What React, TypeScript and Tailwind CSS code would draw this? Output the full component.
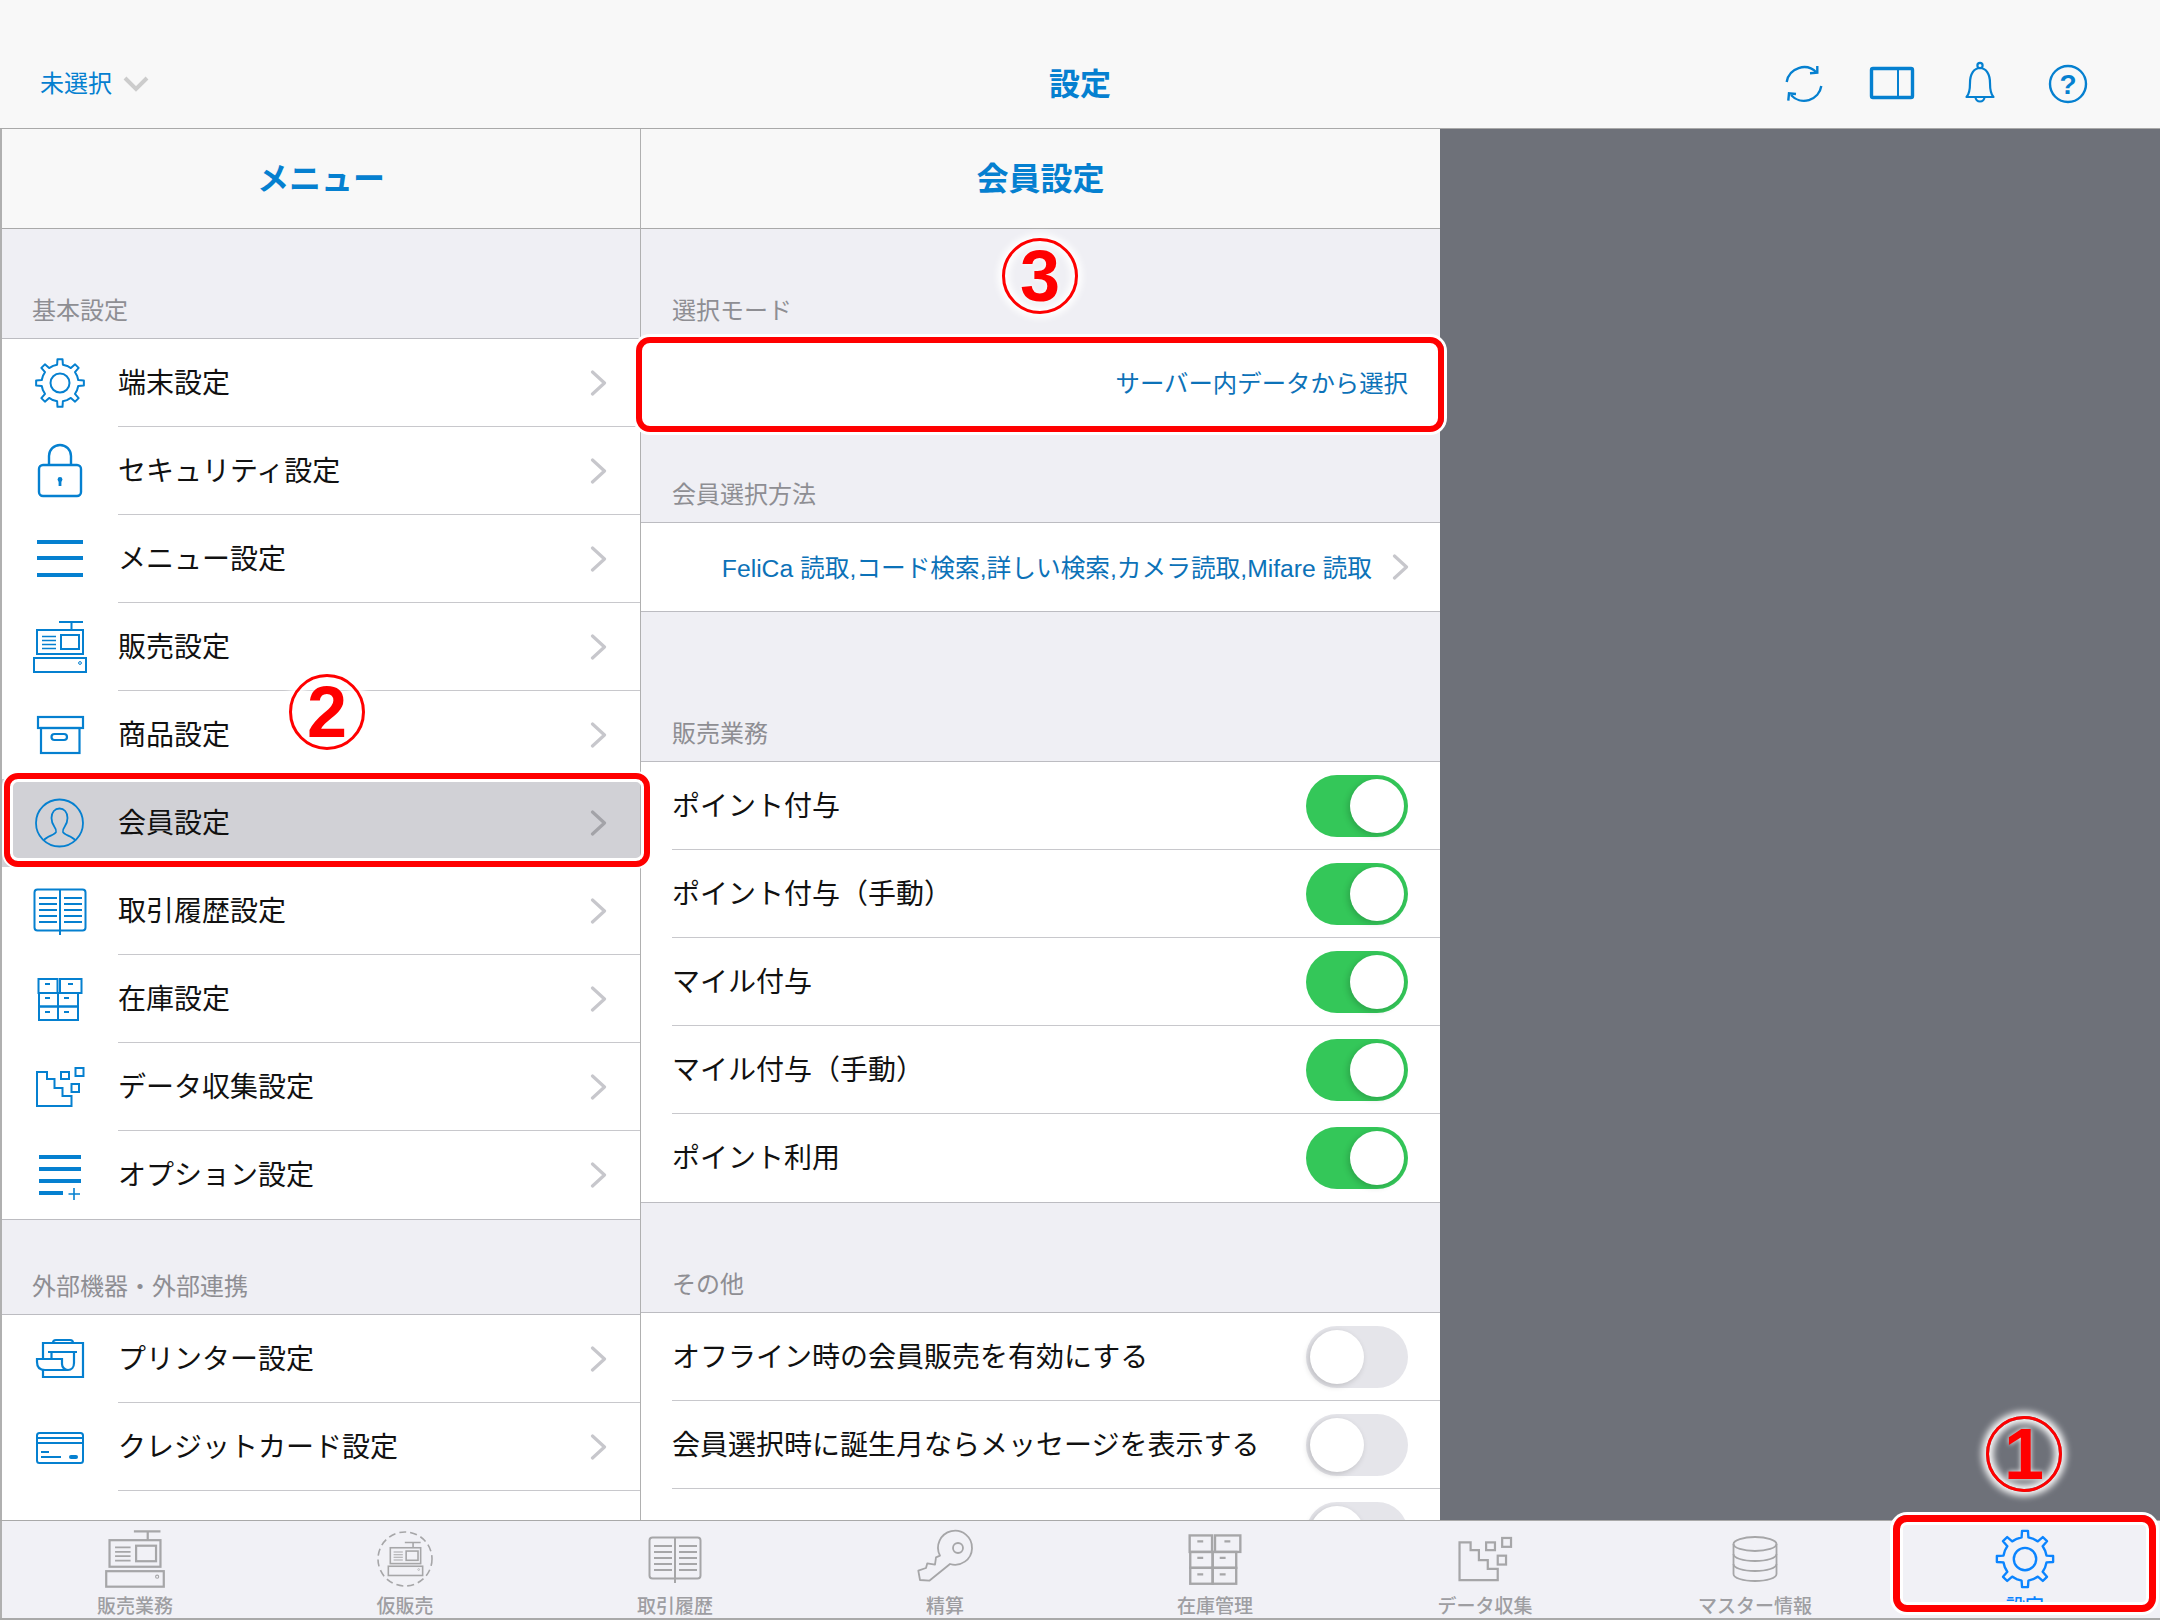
import type { ReactNode } from 'react';

const gearPoints = () => {
    const pts: string[] = [];
    for (let i = 0; i < 8; i++) {
        const a = -90 + i * 45;
        [
            [a - 22, 18.5],
            [a - 9, 18.5],
            [a - 6, 24],
            [a + 6, 24],
            [a + 9, 18.5],
        ].forEach(([deg, r]) => {
            const t = (deg * Math.PI) / 180;
            pts.push(`${(28 + r * Math.cos(t)).toFixed(2)},${(28 + r * Math.sin(t)).toFixed(2)}`);
        });
    }
    return pts.join(' ');
};

function Svg({ size = 56, box = '0 0 56 56', sw = 2, children }: { size?: number; box?: string; sw?: number; children: ReactNode }) {
    return (
        <svg width={size} height={size} viewBox={box} fill="none" stroke="currentColor" strokeWidth={sw} className="shrink-0">
            {children}
        </svg>
    );
}

function GearIcon({ size }: { size?: number }) {
    return (
        <Svg size={size}>
            <polygon points={gearPoints()} strokeLinejoin="round" />
            <circle cx="28" cy="28" r="9.5" />
        </Svg>
    );
}

function LockIcon() {
    return (
        <Svg sw={2.4}>
            <rect x="7" y="22" width="42" height="31" rx="4" />
            <path d="M17 22V13a11 11 0 0 1 22 0v9" />
            <circle cx="28" cy="36.5" r="2.4" fill="currentColor" stroke="none" />
            <rect x="26.6" y="37" width="2.8" height="6" fill="currentColor" stroke="none" />
        </Svg>
    );
}

function MenuIcon() {
    return (
        <Svg sw={4}>
            <path d="M5 11H51M5 27H51M5 44H51" />
        </Svg>
    );
}

function RegisterShapes() {
    return (
        <>
            <path d="M27 3H51M39.5 3V11" />
            <rect x="5" y="11" width="46" height="24" />
            <rect x="29" y="16" width="18" height="14" />
            <path d="M10 17.5H24M10 21.5H24M10 25.5H24M10 29.5H24" strokeWidth="1.6" />
            <rect x="2" y="39" width="52" height="14" />
            <circle cx="48" cy="44" r="1.4" strokeWidth="1" />
        </>
    );
}

function RegisterIcon({ size }: { size?: number }) {
    return (
        <Svg size={size}>
            <RegisterShapes />
        </Svg>
    );
}

function DashedRegisterIcon() {
    return (
        <Svg size={64} box="0 0 64 64" sw={1.6}>
            <circle cx="32" cy="32" r="27" strokeDasharray="7 4" />
            <g transform="translate(14 13.5) scale(0.66)" strokeWidth="2.4">
                <RegisterShapes />
            </g>
        </Svg>
    );
}

function BoxIcon() {
    return (
        <Svg sw={2.2}>
            <rect x="6" y="10" width="45" height="11" />
            <rect x="9" y="21" width="38.5" height="25" />
            <rect x="19.5" y="27" width="15.5" height="6" rx="3" />
        </Svg>
    );
}

function PersonIcon() {
    return (
        <Svg sw={1.8}>
            <circle cx="27.5" cy="28" r="23.5" />
            <path d="M12 45c3-4 11-5 12-8 .5-2 0-3-1.5-5-1.500-2-3-5-3-9 0-6 3.500-9.500 8-9.500s8 3.500 8 9.500c0 4-1.500 7-3 9-1.500 2-2 3-1.500 5 1 3 9 4 12 8" />
        </Svg>
    );
}

function BookIcon({ size }: { size?: number }) {
    return (
        <Svg size={size} sw={2}>
            <rect x="2.500" y="6.500" width="51" height="41" rx="3" />
            <path d="M28 6.500V52" />
            <path d="M7 15H25M7 21H25M7 27H25M7 33H25M7 39H25M32 15H50M32 21H50M32 27H50M32 33H50M32 39H50" />
        </Svg>
    );
}

function DrawersIcon({ size }: { size?: number }) {
    return (
        <Svg size={size} sw={2}>
            <rect x="6.500" y="8" width="19" height="14" />
            <rect x="28" y="8" width="21.500" height="14" />
            <rect x="7" y="22" width="19" height="13.500" />
            <rect x="26" y="22" width="20" height="13.500" />
            <rect x="7" y="35.500" width="19" height="13.500" />
            <rect x="26" y="35.500" width="20" height="13.500" />
            <path d="M13 13H18M36 13H41M13 27H18M32 27H37M13 41H18M32 41H37" />
        </Svg>
    );
}

function StairsIcon({ size }: { size?: number }) {
    return (
        <Svg size={size} sw={2}>
            <path d="M5 13H15V20H22.500V29H30.500V37H39.500V47H5Z" />
            <rect x="29" y="13" width="8" height="7" />
            <rect x="43.500" y="9" width="8" height="8" />
            <rect x="39.500" y="25" width="7.500" height="8" />
        </Svg>
    );
}

function ListPlusIcon() {
    return (
        <Svg sw={4}>
            <path d="M7 10H49M7 22H49M7 34H49M7 46H31" />
            <path d="M42 41V53M36.500 47H48" strokeWidth="1.600" />
        </Svg>
    );
}

function PrinterIcon() {
    return (
        <Svg sw={2.200}>
            <path d="M11 28V12H51V46H11V39" />
            <path d="M21 12C21 10 22 9 24 9H38C40 9 41 10 41 12" />
            <path d="M16 21H45M19.500 21V28M42 21V32C42 36 39.500 39 36 39C32.500 39 30 36 30 33V28H5V31C5 36 8 39 13 39H36" />
        </Svg>
    );
}

function CardIcon() {
    return (
        <Svg sw={2}>
            <rect x="5" y="14" width="46" height="30" rx="2.500" />
            <path d="M5 19H51M5 24H51" />
            <path d="M9 33H17M9 38H29" />
            <rect x="37" y="36" width="9" height="4" rx="2" fill="currentColor" stroke="none" />
        </Svg>
    );
}

function KeyIcon() {
    return (
        <Svg size={70} box="10 0 70 70" sw={1.800}>
            <path d="M40 31.700A17 17 0 1 1 50 40L29.300 56.700L20 56L18.300 46.700L26 44L27.300 39.300L35 40.700L36 33.300Z" strokeLinejoin="round" />
            <circle cx="58" cy="24" r="5" />
        </Svg>
    );
}

function DatabaseIcon() {
    return (
        <Svg size={56} sw={1.800}>
            <ellipse cx="28" cy="13" rx="21.500" ry="7" />
            <path d="M6.500 13V43C6.500 47 16 50 28 50S49.500 47 49.500 43V13" />
            <path d="M6.500 23C6.500 27 16 30 28 30S49.500 27 49.500 23M6.500 33C6.500 37 16 40 28 40S49.500 37 49.500 33" />
        </Svg>
    );
}

function Chevron({ dark }: { dark?: boolean }) {
    return (
        <svg width="17" height="26" viewBox="0 0 17 26" fill="none" stroke={dark ? '#a3a3a8' : '#c7c7cc'} strokeWidth="3.200" strokeLinecap="round" strokeLinejoin="round" className="shrink-0">
            <path d="M2.500 2L14.500 13L2.500 24" />
        </svg>
    );
}

function Toggle({ on }: { on: boolean }) {
    return (
        <div className={on ? 'flex h-[62px] w-[102px] shrink-0 justify-end rounded-full bg-[#34c759] p-[4px]' : 'flex h-[62px] w-[102px] shrink-0 justify-start rounded-full bg-[#e5e5ea] p-[4px]'}>
            <div className="h-[54px] w-[54px] rounded-full bg-white shadow-[-2px_2px_6px_rgba(0,0,0,0.18)]" />
        </div>
    );
}

function SectionHead({ label, className }: { label: string; className: string }) {
    return (
        <div className={`flex shrink-0 items-end border-b border-[#bcbcc1] bg-[#efeff4] pb-[10px] text-[24px] leading-[34px] text-[#8e8e93] ${className}`}>
            {label}
        </div>
    );
}

const menuBasic: { label: string; icon: ReactNode; selected?: boolean }[] = [
    { label: '端末設定', icon: <GearIcon /> },
    { label: 'セキュリティ設定', icon: <LockIcon /> },
    { label: 'メニュー設定', icon: <MenuIcon /> },
    { label: '販売設定', icon: <RegisterIcon /> },
    { label: '商品設定', icon: <BoxIcon /> },
    { label: '会員設定', icon: <PersonIcon />, selected: true },
    { label: '取引履歴設定', icon: <BookIcon /> },
    { label: '在庫設定', icon: <DrawersIcon /> },
    { label: 'データ収集設定', icon: <StairsIcon /> },
    { label: 'オプション設定', icon: <ListPlusIcon /> },
];

const menuExternal = [
    { label: 'プリンター設定', icon: <PrinterIcon /> },
    { label: 'クレジットカード設定', icon: <CardIcon /> },
];

function MenuRow({ label, icon, selected, last }: { label: string; icon: ReactNode; selected?: boolean; last?: boolean }) {
    return (
        <div className={selected ? 'flex h-[88px] shrink-0 items-center bg-[#d1d1d6] pl-[30px]' : 'flex h-[88px] shrink-0 items-center pl-[30px]'}>
            <div className="text-[#0580d0]">{icon}</div>
            <div className={last ? 'ml-[30px] flex h-full flex-1 items-center pr-[33px]' : 'ml-[30px] flex h-full flex-1 items-center border-b border-[#c8c8cc] pr-[33px]'}>
                <span className="flex-1 pt-[2px] text-[28px] text-[#111]">{label}</span>
                <Chevron dark={selected} />
            </div>
        </div>
    );
}

function SwitchRow({ label, on, last }: { label: string; on: boolean; last?: boolean }) {
    return (
        <div className="h-[88px] shrink-0 pl-[31px]">
            <div className={last ? 'flex h-full items-center justify-between pr-[32px]' : 'flex h-full items-center justify-between border-b border-[#c8c8cc] pr-[32px]'}>
                <span className="pt-[2px] text-[28px] text-[#111]">{label}</span>
                <Toggle on={on} />
            </div>
        </div>
    );
}

const tabs = [
    { label: '販売業務', icon: <RegisterIcon size={62} /> },
    { label: '仮販売', icon: <DashedRegisterIcon /> },
    { label: '取引履歴', icon: <BookIcon size={56} /> },
    { label: '精算', icon: <KeyIcon /> },
    { label: '在庫管理', icon: <DrawersIcon size={66} /> },
    { label: 'データ収集', icon: <StairsIcon size={62} /> },
    { label: 'マスター情報', icon: <DatabaseIcon /> },
];

function Annotation({ digit, className }: { digit: string; className: string }) {
    return (
        <div className={`absolute flex h-[76px] w-[76px] items-center justify-center rounded-full border-[3px] border-[#ff0000] font-['Liberation_Sans',sans-serif] text-[72px] leading-none font-bold text-[#ff0000] shadow-[0_0_7px_4px_white,inset_0_0_7px_4px_white] [text-shadow:0_0_5px_white] ${className}`}>
            {digit}
        </div>
    );
}

export default function App() {
    return (
        <div className="relative flex h-[1620px] w-[2160px] flex-col overflow-hidden bg-[#f1f1f6] font-['Liberation_Sans','Noto_Sans_CJK_JP',sans-serif]">
            <header className="grid h-[129px] shrink-0 grid-cols-3 items-center border-b border-[#a9a9a9] bg-[#f8f8f8] pt-[40px] text-[#0580d0]">
                <div className="flex items-center gap-[11px] pl-[40px]">
                    <span className="text-[24px]">未選択</span>
                    <svg width="26" height="16" viewBox="0 0 26 16" fill="none" stroke="#cccccc" strokeWidth="4">
                        <path d="M2 2L13 13L24 2" />
                    </svg>
                </div>
                <div className="justify-self-center pt-[2px] text-[31px] font-bold">設定</div>
                <div className="flex justify-end pr-[48px]">
                    <div className="flex w-[88px] justify-center">
                        <svg width="48" height="48" viewBox="0 0 48 48" fill="none" stroke="currentColor" strokeWidth="2.400">
                            <path d="M6.700 22A17.500 17.500 0 0 1 36.500 12.500" />
                            <path d="M30 13.300L37.300 12.700V6" />
                            <path d="M41.300 26A17.500 17.500 0 0 1 11 35" />
                            <path d="M8.300 40.700L9 33.300L16 34" />
                        </svg>
                    </div>
                    <div className="flex w-[88px] justify-center">
                        <svg width="48" height="48" viewBox="0 0 48 48" fill="none" stroke="currentColor">
                            <rect x="3.500" y="8.500" width="41" height="29" rx="1.500" strokeWidth="3.400" />
                            <path d="M30 8V38" strokeWidth="2" />
                        </svg>
                    </div>
                    <div className="flex w-[88px] justify-center">
                        <svg width="48" height="48" viewBox="0 0 48 48" fill="none" stroke="currentColor" strokeWidth="2.200">
                            <circle cx="24" cy="5.500" r="2.600" />
                            <path d="M10.500 37C13.500 34 14 29 14 23C14 14 18 8 24 8S34 14 34 23C34 29 34.500 34 37.500 37Z" strokeLinejoin="round" />
                            <path d="M19.500 37A4.500 4.500 0 0 0 28.500 37" />
                        </svg>
                    </div>
                    <div className="flex w-[88px] justify-center">
                        <svg width="48" height="48" viewBox="0 0 48 48" fill="none" stroke="currentColor" strokeWidth="2.400">
                            <circle cx="24" cy="24" r="18" />
                            <text x="24" y="34" textAnchor="middle" fontFamily="Liberation Sans" fontWeight="700" fontSize="28" fill="currentColor" stroke="none">
                                ?
                            </text>
                        </svg>
                    </div>
                </div>
            </header>

            <main className="flex min-h-0 flex-1">
                <section className="flex w-[641px] shrink-0 flex-col overflow-hidden border-r border-l-2 border-[#b0b0b0] bg-white">
                    <div className="flex h-[100px] shrink-0 items-center justify-center border-b border-[#a9a9a9] bg-[#f8f8f8] text-[32px] font-bold text-[#0580d0]">
                        メニュー
                    </div>
                    <SectionHead label="基本設定" className="h-[110px] pl-[30px]" />
                    {menuBasic.map((row, i) => (
                        <MenuRow key={row.label} {...row} last={i === menuBasic.length - 1} />
                    ))}
                    <div className="shrink-0 border-t border-[#bcbcc1]" />
                    <SectionHead label="外部機器・外部連携" className="h-[95px] pl-[30px]" />
                    {menuExternal.map((row) => (
                        <MenuRow key={row.label} {...row} />
                    ))}
                </section>

                <section className="flex w-[799px] shrink-0 flex-col overflow-hidden bg-white">
                    <div className="flex h-[100px] shrink-0 items-center justify-center border-b border-[#a9a9a9] bg-[#f8f8f8] text-[32px] font-bold text-[#0580d0]">
                        会員設定
                    </div>
                    <SectionHead label="選択モード" className="h-[110px] pl-[31px]" />
                    <div className="flex h-[88px] shrink-0 items-center justify-end pt-[2px] pr-[32px] text-[24.4px] text-[#0c72b8]">サーバー内データから選択</div>
                    <SectionHead label="会員選択方法" className="h-[96px] border-t border-t-[#bcbcc1] pl-[31px]" />
                    <div className="flex h-[88px] shrink-0 items-center justify-end gap-[20px] pr-[31px] text-[24.7px] text-[#0c72b8]">
                        <span className="pt-[3px]">FeliCa 読取,コード検索,詳しい検索,カメラ読取,Mifare 読取</span>
                        <Chevron />
                    </div>
                    <SectionHead label="販売業務" className="h-[151px] border-t border-t-[#bcbcc1] pl-[31px]" />
                    <SwitchRow label="ポイント付与" on />
                    <SwitchRow label="ポイント付与（手動）" on />
                    <SwitchRow label="マイル付与" on />
                    <SwitchRow label="マイル付与（手動）" on />
                    <SwitchRow label="ポイント利用" on last />
                    <SectionHead label="その他" className="h-[111px] border-t border-t-[#bcbcc1] pl-[31px]" />
                    <SwitchRow label="オフライン時の会員販売を有効にする" on={false} />
                    <SwitchRow label="会員選択時に誕生月ならメッセージを表示する" on={false} />
                    <SwitchRow label="" on={false} />
                </section>

                <div className="flex-1 bg-[#6e7179]" />
            </main>

            <nav className="grid h-[100px] shrink-0 grid-cols-8 border-t border-b-2 border-[#a9a9a9] bg-[#f1f1f6] shadow-[inset_2px_0_0_#b0b0b0]">
                {tabs.map((tab) => (
                    <div key={tab.label} className="flex flex-col items-center text-[#a6a6a8]">
                        <div className="flex h-[75px] items-center">{tab.icon}</div>
                        <span className="text-[19px] leading-[22px] font-medium text-[#9e9ea2]">{tab.label}</span>
                    </div>
                ))}
                <div className="flex flex-col items-center text-[#0a84ff]">
                    <div className="flex h-[75px] items-center">
                        <GearIcon size={66} />
                    </div>
                    <span className="text-[19px] leading-[22px] font-medium">設定</span>
                </div>
            </nav>

            <div className="absolute top-[773px] left-[4px] h-[94px] w-[646px] rounded-[14px] border-[6px] border-[#ff0000] shadow-[0_0_0_2px_white,inset_0_0_0_3px_white]" />
            <div className="absolute top-[337px] left-[636px] h-[95px] w-[808px] rounded-[14px] border-[6px] border-[#ff0000] shadow-[0_0_0_3px_white,inset_0_0_0_1px_white]" />
            <div className="absolute top-[1515px] left-[1893px] h-[97px] w-[263px] rounded-[14px] border-[7px] border-[#ff0000] shadow-[0_0_0_3px_white,inset_0_0_0_3px_white]" />
            <Annotation digit="2" className="top-[674px] left-[289px]" />
            <Annotation digit="3" className="top-[238px] left-[1002px]" />
            <Annotation digit="1" className="top-[1416px] left-[1986px]" />
        </div>
    );
}
